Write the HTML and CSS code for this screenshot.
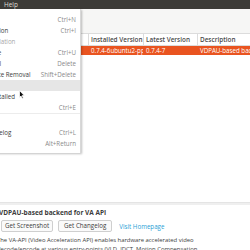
FILE: index.html
```html
<!DOCTYPE html>
<html lang="en">
<head>
    <meta charset="UTF-8">
    <title>Synaptic Package Manager</title>
    <link rel="stylesheet" href="styles.css">
</head>
<body>

    <div class="menubar">
        <span class="menubar-item">Help</span>
    </div>

    <div class="toolbar"></div>

    <div class="list">
        <div class="list-row list-head">
            <span class="cell"></span>
            <span class="cell">Installed Version</span>
            <span class="cell">Latest Version</span>
            <span class="cell">Description</span>
        </div>
        <div class="list-row selected">
            <span class="cell"></span>
            <span class="cell">0.7.4-6ubuntu2-pp</span>
            <span class="cell">0.7.4-7</span>
            <span class="cell">VDPAU-based backend for VA API</span>
        </div>
    </div>

    <div class="pane-handle"></div>

    <div class="details">
        <p class="details-title">VDPAU-based backend for VA API</p>
        <div class="details-actions">
            <a class="button">Get Screenshot</a>
            <a class="button">Get Changelog</a>
            <a class="link">Visit Homepage</a>
        </div>
        <p class="details-text">
            The VA-API (Video Acceleration API) enables hardware accelerated video<br>
            decode/encode at various entry-points (VLD, IDCT, Motion Compensation
        </p>
    </div>

    <!-- Package menu, dropped down over the list -->
    <div class="menu">
        <div class="menu-item"><span>Unmark</span><span class="accel">Ctrl+N</span></div>
        <div class="menu-item"><span>Mark for Installation</span><span class="accel">Ctrl+I</span></div>
        <div class="menu-item disabled"><span>Mark for Reinstallation</span><span class="accel"></span></div>
        <div class="menu-item"><span>Mark for Upgrade</span><span class="accel">Ctrl+U</span></div>
        <div class="menu-item"><span>Mark for Removal</span><span class="accel">Delete</span></div>
        <div class="menu-item"><span>Mark for Complete Removal</span><span class="accel">Shift+Delete</span></div>
        <div class="menu-item hover"><span>Lock Version</span><span class="accel"></span></div>
        <div class="menu-item"><span>Automatically installed</span><span class="accel"></span></div>
        <div class="menu-item"><span>Force Version...</span><span class="accel">Ctrl+E</span></div>
        <div class="menu-separator"></div>
        <div class="menu-item"><span>Configure...</span><span class="accel"></span></div>
        <div class="menu-item"><span>Download Changelog</span><span class="accel">Ctrl+L</span></div>
        <div class="menu-item"><span>Properties</span><span class="accel">Alt+Return</span></div>
    </div>

    <svg class="cursor" width="6" height="9" viewBox="0 0 6 9">
        <path d="M0.5 0.5 L0.5 7.5 L2 6 L3.2 8.5 L4.3 8 L3.2 5.6 L5.3 5.6 Z" fill="#111" stroke="#fff" stroke-width="0.8"/>
    </svg>

</body>
</html>
```

FILE: styles.css
```css
:root {
    --dark-bar: #3c3b37;
    --bar-text: #dfdbd2;
    --window-bg: #f6f6f5;
    --text-color: #3c3c3c;
    --muted-color: #8a8a8a;
    --border-color: #dcdcdc;
    --select-color: #e95420;
    --link-color: #2a9fd6;
    --font-family: "Open Sans", "DejaVu Sans", sans-serif;
}
html, body {
    margin: 0;
    width: 250px;
    height: 250px;
    overflow: hidden;
}
body {
    position: relative;
    display: flex;
    flex-direction: column;
    font-family: var(--font-family);
    font-size: 6.2px;
    color: var(--text-color);
    background-color: #ffffff;
}

/* --- MENUBAR / TOOLBAR --- */
.menubar {
    height: 9px;
    flex-shrink: 0;
    display: flex;
    align-items: center;
    padding-left: 4px;
    background-color: var(--dark-bar);
    color: var(--bar-text);
    font-size: 6.4px;
}
.toolbar {
    height: 24px;
    flex-shrink: 0;
    background-color: var(--window-bg);
}

/* --- PACKAGE LIST --- */
.list {
    flex: 1;
    background-color: #ffffff;
}
.list-row {
    display: grid;
    grid-template-columns: 88px 55px 54px 1fr;
    height: 9px;
    align-items: center;
    white-space: nowrap;
}
.list-head {
    height: 11px;
    border-top: 1px solid var(--border-color);
    border-bottom: 1px solid var(--border-color);
    font-weight: 600;
    font-size: 6.4px;
    color: #4a4a4a;
}
.list-head .cell {
    height: 100%;
    display: flex;
    align-items: center;
    border-left: 1px solid var(--border-color);
}
.cell {
    padding-left: 2px;
    overflow: hidden;
}
.selected {
    background-color: var(--select-color);
    color: #ffffff;
}
.selected .cell {
    padding-left: 3px;
}

.pane-handle {
    height: 2px;
    flex-shrink: 0;
    border-top: 1px solid #e4e4e4;
    background-color: #efefef;
}

/* --- DETAILS --- */
.details {
    height: 45px;
    flex-shrink: 0;
    padding-top: 3px;
    margin-left: -3px;
    box-sizing: border-box;
    background-color: #ffffff;
}
.details-title {
    margin: 0 0 0 2px;
    font-weight: bold;
    font-size: 6.5px;
    line-height: 9px;
    white-space: nowrap;
}
.details-actions {
    display: flex;
    align-items: center;
    gap: 5px;
    margin: 3px 0 0 4px;
    white-space: nowrap;
}
.button {
    display: inline-block;
    height: 10px;
    line-height: 10px;
    padding: 0 3px;
    border: 1px solid #cfcfcf;
    border-radius: 2px;
    background-color: #fafafa;
}
.button:nth-child(2) {
    padding: 0 5px;
}
.link {
    margin-left: 2px;
    color: var(--link-color);
}
.details-text {
    margin: 4px 0 0 0;
    font-size: 5.9px;
    line-height: 8.5px;
    white-space: nowrap;
}

/* --- DROPDOWN MENU --- */
.menu {
    position: absolute;
    top: 9px;
    left: -58px;
    width: 139px;
    padding: 5px 0 4px 0;
    box-sizing: border-box;
    background-color: #ffffff;
    box-shadow: 1px 1px 2px rgba(0, 0, 0, 0.25);
    border-right: 1px solid #d8d8d8;
    z-index: 10;
}
.menu-item {
    display: flex;
    justify-content: space-between;
    align-items: center;
    height: 11px;
    padding: 0 4px 0 8px;
    white-space: nowrap;
}
.menu-item .accel {
    color: var(--muted-color);
}
.menu-item.disabled {
    color: #a8a8a8;
}
.menu-item.hover {
    background-color: #e6e6e6;
}
.menu-separator {
    height: 2px;
    border-top: 1px solid #ececec;
}
.cursor {
    position: absolute;
    top: 90px;
    left: 19px;
    z-index: 11;
}
```
